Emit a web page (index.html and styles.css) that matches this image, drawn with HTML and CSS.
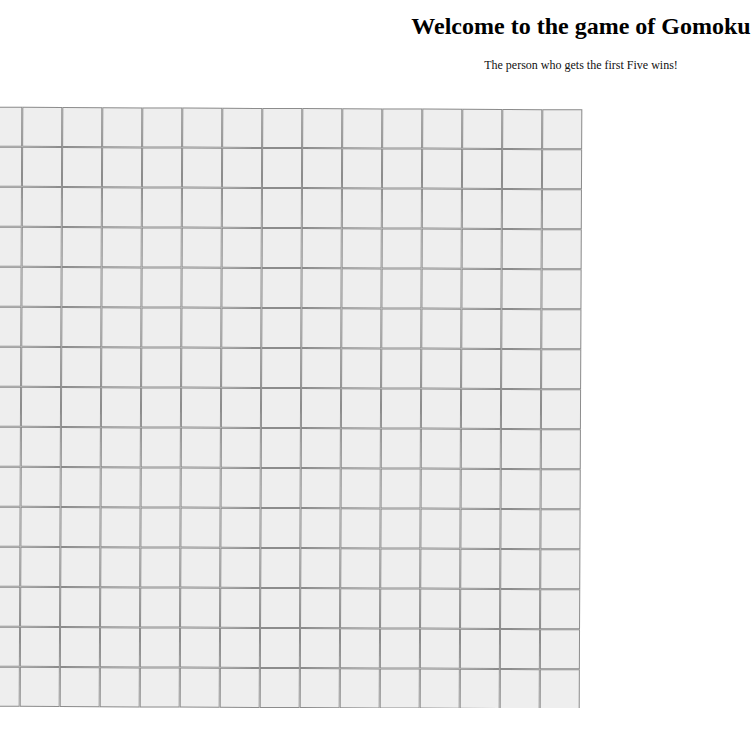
FILE: index.html
```html
<!DOCTYPE html>
<html lang="en">
<head>
<meta charset="utf-8">
<title>Gomoku</title>
<link rel="stylesheet" href="styles.css">
</head>
<body>
<header class="intro">
  <h1 class="title">Welcome to the game of Gomoku</h1>
  <p class="subtitle">The person who gets the first Five wins!</p>
</header>
<main class="board">
<div class="cell"></div><div class="cell"></div><div class="cell"></div><div class="cell"></div><div class="cell"></div><div class="cell"></div><div class="cell"></div><div class="cell"></div><div class="cell"></div><div class="cell"></div><div class="cell"></div><div class="cell"></div><div class="cell"></div><div class="cell"></div><div class="cell"></div>
<div class="cell"></div><div class="cell"></div><div class="cell"></div><div class="cell"></div><div class="cell"></div><div class="cell"></div><div class="cell"></div><div class="cell"></div><div class="cell"></div><div class="cell"></div><div class="cell"></div><div class="cell"></div><div class="cell"></div><div class="cell"></div><div class="cell"></div>
<div class="cell"></div><div class="cell"></div><div class="cell"></div><div class="cell"></div><div class="cell"></div><div class="cell"></div><div class="cell"></div><div class="cell"></div><div class="cell"></div><div class="cell"></div><div class="cell"></div><div class="cell"></div><div class="cell"></div><div class="cell"></div><div class="cell"></div>
<div class="cell"></div><div class="cell"></div><div class="cell"></div><div class="cell"></div><div class="cell"></div><div class="cell"></div><div class="cell"></div><div class="cell"></div><div class="cell"></div><div class="cell"></div><div class="cell"></div><div class="cell"></div><div class="cell"></div><div class="cell"></div><div class="cell"></div>
<div class="cell"></div><div class="cell"></div><div class="cell"></div><div class="cell"></div><div class="cell"></div><div class="cell"></div><div class="cell"></div><div class="cell"></div><div class="cell"></div><div class="cell"></div><div class="cell"></div><div class="cell"></div><div class="cell"></div><div class="cell"></div><div class="cell"></div>
<div class="cell"></div><div class="cell"></div><div class="cell"></div><div class="cell"></div><div class="cell"></div><div class="cell"></div><div class="cell"></div><div class="cell"></div><div class="cell"></div><div class="cell"></div><div class="cell"></div><div class="cell"></div><div class="cell"></div><div class="cell"></div><div class="cell"></div>
<div class="cell"></div><div class="cell"></div><div class="cell"></div><div class="cell"></div><div class="cell"></div><div class="cell"></div><div class="cell"></div><div class="cell"></div><div class="cell"></div><div class="cell"></div><div class="cell"></div><div class="cell"></div><div class="cell"></div><div class="cell"></div><div class="cell"></div>
<div class="cell"></div><div class="cell"></div><div class="cell"></div><div class="cell"></div><div class="cell"></div><div class="cell"></div><div class="cell"></div><div class="cell"></div><div class="cell"></div><div class="cell"></div><div class="cell"></div><div class="cell"></div><div class="cell"></div><div class="cell"></div><div class="cell"></div>
<div class="cell"></div><div class="cell"></div><div class="cell"></div><div class="cell"></div><div class="cell"></div><div class="cell"></div><div class="cell"></div><div class="cell"></div><div class="cell"></div><div class="cell"></div><div class="cell"></div><div class="cell"></div><div class="cell"></div><div class="cell"></div><div class="cell"></div>
<div class="cell"></div><div class="cell"></div><div class="cell"></div><div class="cell"></div><div class="cell"></div><div class="cell"></div><div class="cell"></div><div class="cell"></div><div class="cell"></div><div class="cell"></div><div class="cell"></div><div class="cell"></div><div class="cell"></div><div class="cell"></div><div class="cell"></div>
<div class="cell"></div><div class="cell"></div><div class="cell"></div><div class="cell"></div><div class="cell"></div><div class="cell"></div><div class="cell"></div><div class="cell"></div><div class="cell"></div><div class="cell"></div><div class="cell"></div><div class="cell"></div><div class="cell"></div><div class="cell"></div><div class="cell"></div>
<div class="cell"></div><div class="cell"></div><div class="cell"></div><div class="cell"></div><div class="cell"></div><div class="cell"></div><div class="cell"></div><div class="cell"></div><div class="cell"></div><div class="cell"></div><div class="cell"></div><div class="cell"></div><div class="cell"></div><div class="cell"></div><div class="cell"></div>
<div class="cell"></div><div class="cell"></div><div class="cell"></div><div class="cell"></div><div class="cell"></div><div class="cell"></div><div class="cell"></div><div class="cell"></div><div class="cell"></div><div class="cell"></div><div class="cell"></div><div class="cell"></div><div class="cell"></div><div class="cell"></div><div class="cell"></div>
<div class="cell"></div><div class="cell"></div><div class="cell"></div><div class="cell"></div><div class="cell"></div><div class="cell"></div><div class="cell"></div><div class="cell"></div><div class="cell"></div><div class="cell"></div><div class="cell"></div><div class="cell"></div><div class="cell"></div><div class="cell"></div><div class="cell"></div>
<div class="cell"></div><div class="cell"></div><div class="cell"></div><div class="cell"></div><div class="cell"></div><div class="cell"></div><div class="cell"></div><div class="cell"></div><div class="cell"></div><div class="cell"></div><div class="cell"></div><div class="cell"></div><div class="cell"></div><div class="cell"></div><div class="cell"></div>
</main>
</body>
</html>
```
FILE: styles.css
```css
html, body {
  margin: 0;
  padding: 0;
  background: #ffffff;
}

body {
  font-family: "Liberation Serif", "Times New Roman", serif;
  color: #000000;
  overflow: hidden;
}

.intro {
  padding-left: 410px;
  text-align: center;
  white-space: nowrap;
}

.title {
  margin: 13px 0 0;
  font-size: 24px;
  font-weight: bold;
  line-height: normal;
}

.subtitle {
  margin: 18px 0 0;
  font-size: 12px;
  line-height: normal;
  color: #111111;
}

.board {
  display: grid;
  grid-template-columns: repeat(15, 40px);
  grid-auto-rows: 40px;
  width: 600px;
  margin: 35px 0 0 -19px;
  transform: rotate(0.25deg);
}

.cell {
  box-sizing: border-box;
  border: 1px solid #8c8c8c;
  background: #eeeeee;
}
```
